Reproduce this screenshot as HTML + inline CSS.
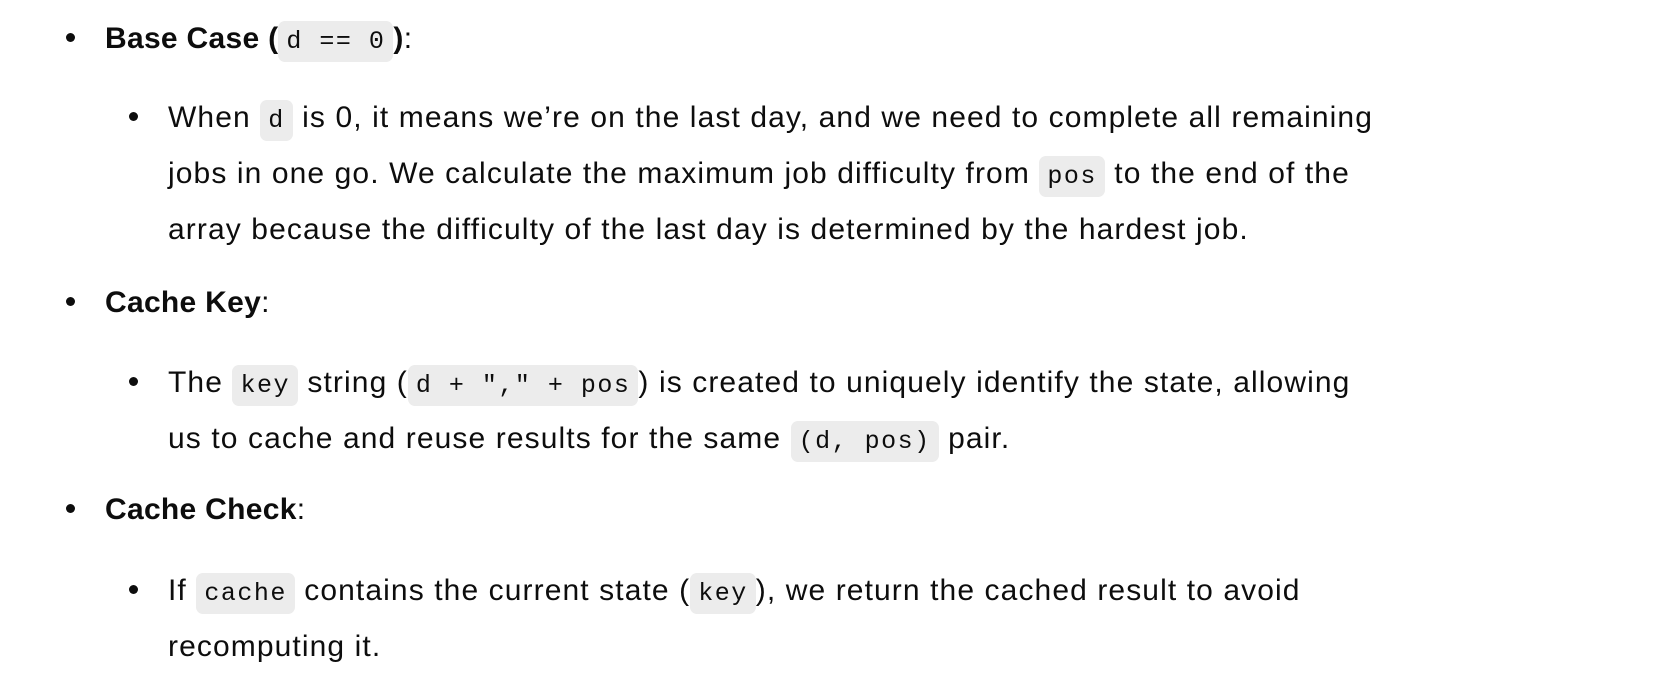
<!DOCTYPE html>
<html><head><meta charset="utf-8"><style>
body{margin:0;width:1658px;height:680px;background:#fff;overflow:hidden;font-family:"Liberation Sans",sans-serif;color:#0d0d0d;}
.l{position:absolute;height:56px;line-height:56px;font-size:30px;letter-spacing:1.1px;white-space:nowrap;}
.b{position:absolute;width:9px;height:9px;border-radius:50%;background:#0d0d0d;}
code{font-family:"Liberation Mono",monospace;font-size:25px;letter-spacing:1.5px;font-weight:normal;background:#ececec;border-radius:7px;padding:6px 8px;}
strong{font-weight:bold;letter-spacing:0.3px;}
</style></head><body>
<div class="b" style="left:66px;top:33px"></div>
<div class="l" style="left:105px;top:11px"><strong>Base Case (<code>d == 0</code>)</strong>:</div>
<div class="b" style="left:129px;top:112px"></div>
<div class="l" style="left:168px;top:90px">When <code>d</code> is 0, it means we’re on the last day, and we need to complete all remaining</div>
<div class="l" style="left:168px;top:146px">jobs in one go. We calculate the maximum job difficulty from <code>pos</code> to the end of the</div>
<div class="l" style="left:168px;top:202px">array because the difficulty of the last day is determined by the hardest job.</div>
<div class="b" style="left:66px;top:297px"></div>
<div class="l" style="left:105px;top:275px"><strong>Cache Key</strong>:</div>
<div class="b" style="left:129px;top:377px"></div>
<div class="l" style="left:168px;top:355px">The <code>key</code> string (<code>d + "," + pos</code>) is created to uniquely identify the state, allowing</div>
<div class="l" style="left:168px;top:411px">us to cache and reuse results for the same <code>(d, pos)</code> pair.</div>
<div class="b" style="left:66px;top:504px"></div>
<div class="l" style="left:105px;top:482px"><strong>Cache Check</strong>:</div>
<div class="b" style="left:129px;top:585px"></div>
<div class="l" style="left:168px;top:563px">If <code>cache</code> contains the current state (<code>key</code>), we return the cached result to avoid</div>
<div class="l" style="left:168px;top:619px">recomputing it.</div>
</body></html>
